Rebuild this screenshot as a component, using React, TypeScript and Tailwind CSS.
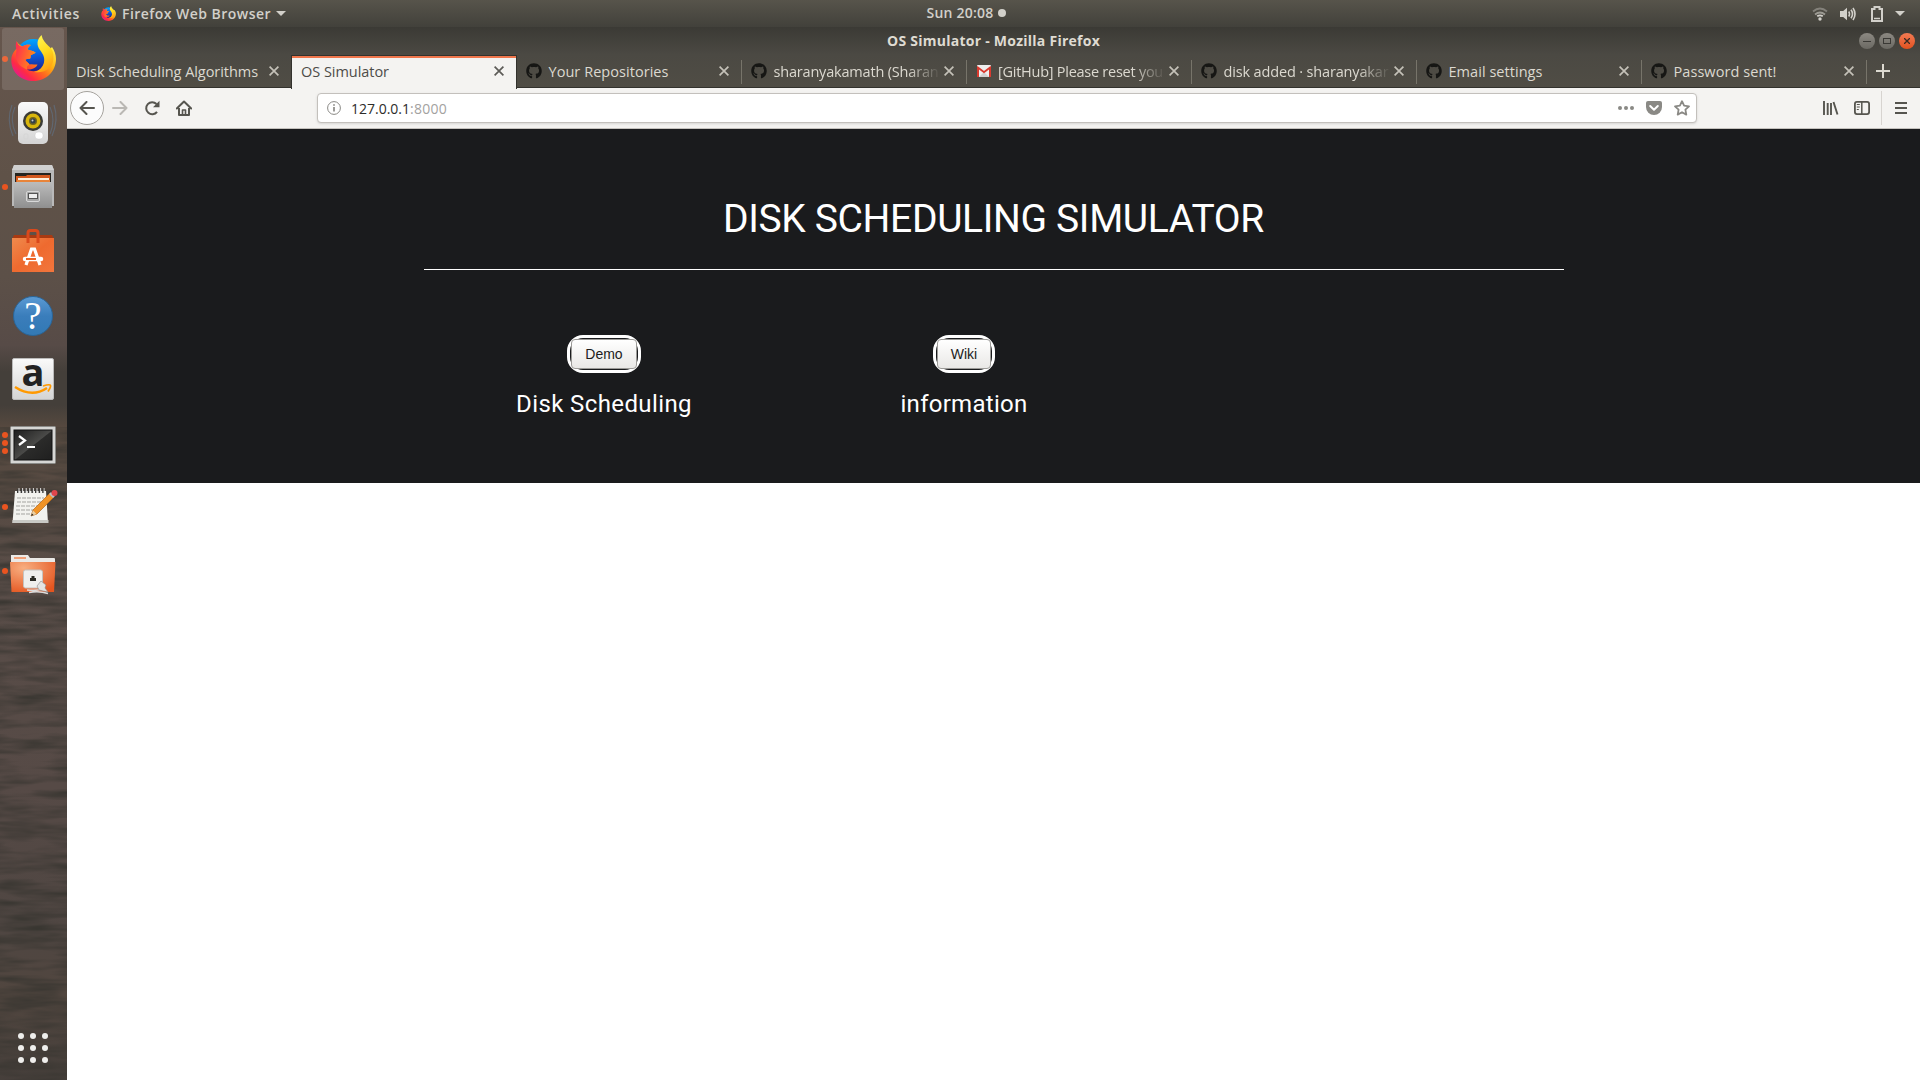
import { useLayoutEffect, useRef, useState, type ReactNode } from "react";
import { FaGithub } from "react-icons/fa";

/* Text tracked so that it fills a given width. */
function Fit({ children, w, className = "" }: { children: string; w: number; className?: string }) {
  const ref = useRef<HTMLSpanElement>(null);
  const [tracking, setTracking] = useState(0);
  useLayoutEffect(() => {
    const el = ref.current;
    if (!el) return;
    const natural = el.getBoundingClientRect().width - tracking * children.length;
    setTracking((w - natural) / children.length);
  }, [w, children]);
  return (
    <span ref={ref} className={`inline-block shrink-0 whitespace-pre ${className}`} style={{ letterSpacing: tracking }}>
      {children}
    </span>
  );
}

function FirefoxArt({ id }: { id: string }) {
  return (
    <>
      <defs>
        <linearGradient id={id + "a"} x1="0.9" y1="0.1" x2="0.15" y2="0.85">
          <stop offset="0" stopColor="#fff44f" />
          <stop offset="0.35" stopColor="#ffb310" />
          <stop offset="0.6" stopColor="#ff6a1f" />
          <stop offset="0.85" stopColor="#ff2a45" />
          <stop offset="1" stopColor="#e81e80" />
        </linearGradient>
        <linearGradient id={id + "b"} x1="0.4" y1="0" x2="0.5" y2="1">
          <stop offset="0" stopColor="#00a8ff" />
          <stop offset="0.45" stopColor="#0a5fe0" />
          <stop offset="1" stopColor="#25127a" />
        </linearGradient>
        <linearGradient id={id + "c"} x1="0.3" y1="0" x2="0.6" y2="1">
          <stop offset="0" stopColor="#fff650" />
          <stop offset="0.5" stopColor="#ffd91c" />
          <stop offset="1" stopColor="#ff9a12" />
        </linearGradient>
        <linearGradient id={id + "d"} x1="0" y1="0" x2="1" y2="0.4">
          <stop offset="0" stopColor="#ff2554" />
          <stop offset="1" stopColor="#ff8a1a" />
        </linearGradient>
      </defs>
      <circle cx="23" cy="22" r="18" fill={`url(#${id}b)`} />
      <path d="M6 6c.5 2.500 1.500 4 3 5C3 16 .8 20 .8 25.500 1 38 11 46 23 46c13 0 22.500-10 22.500-22 0-4.500-1.500-8.500-4-12l-8 8c2 5 .5 11-3.500 14-4.500 3-10 2.500-13.500.5 5 .3 9-1.500 10.500-5-3 .4-5-1-8 0-1-2-4-3-4-5 2-1 5-.5 5-1.500l.2-2.800 5-2.500c-2.500-2-5.500-2-8.200-3.200.5-2 1.800-3.500 3.500-4.500-4-.4-6.500 0-8.500 1.500C9 10 7 8 6 6Z" fill={`url(#${id}a)`} />
      <path d="M6 6c.5 2.500 1.500 4 3 5 1 .3 2 .2 3 .5 2-1.500 4.500-1.900 8.500-1.500-1.700 1-3 2.500-3.500 4.500 2.700 1.200 5.700 1.200 8.200 3.200l-5 2.500L20 23c0 1-3 .5-5 1.500 0 2 3 3 4 5-4 2-2 4-2.500 5C8 31 4 26 6 15c-1-3-1-6 0-9Z" fill={`url(#${id}d)`} />
      <path d="M31 0c-5 5-5 10-1.500 15C33 19.500 35 24 33 29c-1.500 4-5 7-9 8 9 1.500 17-3 18.500-10.500C44 19 42 14 38 11c-3-3-6-6-7-11Z" fill={`url(#${id}c)`} />
    </>
  );
}

function GmailMark() {
  return (
    <svg viewBox="0 0 14 12" className="h-[12px] w-[14px]">
      <rect width="14" height="12" rx="1" fill="#eee" />
      <path d="M2 12 7 7l5 5Z" fill="#d0d0d0" />
      <path d="M0 12V1.200h.8L7 6l6.200-4.800h.8V12h-2V4.500L7 8.200 2 4.500V12Z" fill="#d93a2f" />
    </svg>
  );
}

function Cross({ className }: { className: string }) {
  return (
    <svg viewBox="0 0 10 10" className={`size-[10px] shrink-0 ${className}`} fill="none" stroke="currentColor" strokeWidth="1.700">
      <path d="M.6.6 9.400 9.400M9.400.6.6 9.400" />
    </svg>
  );
}

type TabInfo = { title: string; w: number; icon?: "github" | "gmail"; active?: boolean; faded?: boolean; rule?: boolean };

const tabs: TabInfo[] = [
  { title: "Disk Scheduling Algorithms", w: 182 },
  { title: "OS Simulator", w: 88, active: true },
  { title: "Your Repositories", w: 120, icon: "github", rule: true },
  { title: "sharanyakamath (Sharan", w: 165, icon: "github", faded: true, rule: true },
  { title: "[GitHub] Please reset you", w: 165, icon: "gmail", faded: true, rule: true },
  { title: "disk added · sharanyakar", w: 165, icon: "github", faded: true, rule: true },
  { title: "Email settings", w: 94, icon: "github", rule: true },
  { title: "Password sent!", w: 103, icon: "github", rule: true },
];

function Tab({ title, w, icon, active, faded, rule }: TabInfo) {
  return (
    <div
      className={
        active
          ? "relative z-10 -ml-px flex h-[34px] w-[226px] shrink-0 items-center border-x border-t border-[#33322d] bg-[#f4f3f1] pr-[12px] pb-[3px] pl-[9px] text-[#4d4c48] shadow-[inset_0_2px_0_#f0764c]"
          : "relative flex h-[33px] w-[225px] shrink-0 items-center border-b border-[#33322d] pr-[13px] pl-[9px] text-[#dcd9d0]"
      }
    >
      {icon === "github" && <FaGithub className="mr-[6.500px] size-[16px] shrink-0 text-[#161614]" />}
      {icon === "gmail" && <span className="mr-[7px] ml-px flex w-[14px] shrink-0"><GmailMark /></span>}
      <span className={faded ? "mr-[3px] flex-1 mask-r-from-80% mask-r-to-100%" : "flex-1"}>
        <Fit w={w} className="text-[14.500px] leading-[22px]">{title}</Fit>
      </span>
      <Cross className={active ? "text-[#5c5b57]" : "text-[#c4c1b8]"} />
      {rule && <i className="absolute top-[5px] right-0 h-[24px] w-px bg-[#77746a]" />}
    </div>
  );
}

function TopBar() {
  return (
    <header className="grid h-[27px] shrink-0 grid-cols-3 items-center bg-linear-to-b from-[#57544b] to-[#42413b] text-[14px] leading-[26px] font-semibold text-[#d2d0ca]">
      <div className="flex items-center pl-[12px]">
        <Fit w={68}>Activities</Fit>
        <svg viewBox="0 0 46 46" className="mr-[6px] ml-[21px] size-[15px]"><FirefoxArt id="s" /></svg>
        <Fit w={149}>Firefox Web Browser</Fit>
        <svg viewBox="0 0 10 5" className="ml-[5px] h-[5px] w-[10px]" fill="currentColor"><path d="M0 0h10L5 5Z" /></svg>
      </div>
      <div className="flex items-center justify-center pb-px pl-[12px]">
        <Fit w={67}>Sun 20:08</Fit>
        <i className="ml-[4px] size-[8px] rounded-full bg-[#d2d0ca]" />
      </div>
      <div className="flex items-center justify-end pr-[15px]">
        <svg viewBox="0 0 16 14" className="h-[14px] w-[16px]" fill="none" stroke="#d2d0ca" strokeWidth="1.800">
          <path d="M1 4.500Q8-1.500 15 4.500" opacity=".4" />
          <path d="M3 7.500q5-4 10 0" opacity=".6" />
          <path d="M5.200 9.300q2.800-2 5.600 0" />
          <circle cx="8" cy="12" r="1.700" fill="#d2d0ca" stroke="none" />
        </svg>
        <svg viewBox="0 0 16 14" className="ml-[12px] h-[14px] w-[16px]" fill="none" stroke="#d2d0ca" strokeWidth="1.600">
          <path d="M0 4h3.200L7 .8v12.400L3.200 10H0Z" fill="#d2d0ca" stroke="none" />
          <path d="M8.700 4.500q1.600 2.500 0 5M11 2.800q3 4.200 0 8.400M13 1q4 6 0 12" />
        </svg>
        <svg viewBox="0 0 12 16" className="ml-[15px] h-[16px] w-[12px]" fill="none" stroke="#d2d0ca" strokeWidth="2">
          <path d="M1 3h2.500V1h5v2H11v12H1Z" />
          <path d="M3 12.500h6" strokeWidth="1.500" />
        </svg>
        <svg viewBox="0 0 10 5" className="ml-[12px] h-[5px] w-[10px]" fill="#d2d0ca"><path d="M0 0h10L5 5Z" /></svg>
      </div>
    </header>
  );
}

const dockItems: { name: string; dots: number[]; art: ReactNode }[] = [
  {
    name: "Firefox",
    dots: [59],
    art: (
      <>
        <rect x="2" y="28" width="62" height="62" rx="3" fill="#fff" opacity=".12" />
        <g transform="translate(10.500 35)"><FirefoxArt id="l" /></g>
      </>
    ),
  },
  {
    name: "Rhythmbox",
    dots: [],
    art: (
      <>
        <g fill="none" stroke="#5f7f9f" strokeWidth="1.200" opacity=".45">
          <path d="M15 107q-6 13 1 27M12 105q-6 15 1 31M50 107q6 13 0 27M54 105q5 15-2 31" />
        </g>
        <rect x="18" y="102" width="30" height="42" rx="5" fill="url(#silver)" />
        <circle cx="33" cy="121" r="10" fill="#3b3b35" />
        <circle cx="33" cy="121" r="7.500" fill="#d9b60c" />
        <circle cx="33" cy="121" r="4" fill="#6f6420" />
        <circle cx="33" cy="121" r="2.500" fill="#33404b" />
        <circle cx="32.500" cy="120.500" r="1" fill="#ccc" />
        <rect x="35" y="132" width="8" height="7" rx="3" fill="#fff" stroke="#ccc" strokeWidth=".5" />
        <rect x="24" y="134" width="4" height="5" rx="1" fill="none" stroke="#d5d5d5" />
      </>
    ),
  },
  {
    name: "Files",
    dots: [187],
    art: (
      <>
        <path d="M14 165h38l2 5v36H12v-36Z" fill="#b9b9b9" />
        <path d="M14 165h38l2 5H12Z" fill="#d0d0d0" />
        <rect x="15" y="173" width="36" height="10" fill="#26241f" />
        <path d="M16 176h10l1-1h23v8H16Z" fill="#d4581d" />
        <path d="M18 178h31v2H18Z" fill="#fff0dc" />
        <path d="M17 180h33v3H17Z" fill="#e8843a" />
        <path d="M14 182h38v26H14Z" fill="url(#steel)" />
        <rect x="26.500" y="191.500" width="13" height="10" rx="1.500" fill="#a6a6a6" stroke="#d8d8d8" />
        <rect x="28.500" y="193.500" width="9" height="5" fill="#eee" stroke="#555" />
      </>
    ),
  },
  {
    name: "Ubuntu Software",
    dots: [],
    art: (
      <>
        <path d="M14 235h38l2 4H12Z" fill="#a83a12" />
        <path d="M12 238h42v34H12Z" fill="url(#bag)" />
        <path d="M28 243v-10q0-2.500 2.500-2.500h5q2.500 0 2.500 2.500v10" fill="none" stroke="#d9491c" strokeWidth="3" />
        <path d="m26 265 5.500-16h3L40 265" fill="none" stroke="#fff" strokeWidth="3.200" />
        <path d="M25 259h16" stroke="#fff" strokeWidth="4.500" strokeLinecap="round" />
        <path d="M26 259h10" stroke="#ee6527" strokeWidth="2" />
      </>
    ),
  },
  {
    name: "Help",
    dots: [],
    art: (
      <>
        <circle cx="33" cy="316" r="19.500" fill="url(#help)" stroke="#2a6496" />
        <text x="33" y="329" textAnchor="middle" fontSize="39" fill="#fff" fontFamily="Liberation Serif, serif">?</text>
      </>
    ),
  },
  {
    name: "Amazon",
    dots: [],
    art: (
      <>
        <rect x="12.500" y="358.500" width="41" height="41" rx="1.500" fill="url(#silver)" stroke="#bbb" />
        <text x="33" y="386" textAnchor="middle" fontSize="38" fontWeight="bold" fill="#222" fontFamily="Open Sans, sans-serif">a</text>
        <path d="M15 387q17 11 32 1" fill="none" stroke="#f90" strokeWidth="2.500" />
        <path d="M43 386q7-2 7.500-.5t-2.500 6" fill="none" stroke="#f90" strokeWidth="1.700" />
      </>
    ),
  },
  {
    name: "Terminal",
    dots: [435, 443, 451],
    art: (
      <>
        <rect x="10.500" y="426.500" width="45" height="37" rx="1" fill="#d6d6d4" stroke="#8b8b88" />
        <rect x="14" y="430" width="38" height="30" fill="url(#screen)" stroke="#111" />
        <path d="m19 436 6 4.500-6 4.500" fill="none" stroke="#fff" strokeWidth="2.200" />
        <path d="M27 447h8" stroke="#fff" strokeWidth="2" />
      </>
    ),
  },
  {
    name: "Text Editor",
    dots: [507],
    art: (
      <>
        <path d="M15 491h31l2 32H12.500Z" fill="#f2f2ee" />
        <path d="M12.500 520h36v3h-36Z" fill="#c9c9c5" />
        <path d="M17 498h27M17 502h24M16 506h25M16 510h18M16 514h14" stroke="#a3a39f" strokeWidth="1" strokeDasharray="4 1" />
        <path d="M17 491h28" stroke="#3a3a38" strokeWidth="4" strokeDasharray="1.600 2" />
        <path d="M18.500 490.500h26" stroke="#ddd" strokeWidth="5" strokeDasharray="1 2.600" />
        <path d="m31 516 2-6 17-17 4 4-17 17Z" fill="#f09326" stroke="#b3661a" strokeWidth=".7" />
        <path d="m31 516 2-5.500 3.500 3.500Z" fill="#e9cfa3" />
        <path d="m31 516 1-2.500 1.500 1.500Z" fill="#222" />
        <path d="m49 494 2-2 4 4-2 2Z" fill="#b9bfc6" />
        <circle cx="54.500" cy="493" r="3" fill="#e0464c" />
      </>
    ),
  },
  {
    name: "Network Folder",
    dots: [571],
    art: (
      <>
        <path d="M11 555h17l2 3h24q1 0 1 1v10H11Z" fill="#ebe9e6" />
        <path d="M14 557h12v2H14Z" fill="#f0a078" />
        <path d="M10 562h45.500L54 592H11.500Z" fill="url(#folder)" />
        <rect x="23.500" y="570" width="19" height="18" rx="2" fill="#efefed" stroke="#c5c3c0" />
        <path d="M30 581v-3h1.500v-2h3v2H36v3Z" fill="#2b2b24" />
        <path d="M27 590q10 1 15-1M29 592.500q10-2 19 1" fill="none" stroke="#ddd" strokeWidth="1.600" />
        <path d="m37 586 4-5 5 4-1 3 3 4-5-1-4-1Z" fill="#e4e4e2" stroke="#888" strokeWidth=".6" />
      </>
    ),
  },
];

/* Wood grain of the wallpaper showing through the dock. */
function Grain() {
  return (
    <svg className="absolute inset-0 h-full w-full">
      <filter id="grain" x="0" y="0" width="100%" height="100%" colorInterpolationFilters="sRGB">
        <feTurbulence type="fractalNoise" baseFrequency="0.016 0.11" numOctaves="3" seed="4" />
        <feColorMatrix values="0 0 0 0 .22  0 0 0 0 .21  0 0 0 0 .19  2 0 0 0 -.7" />
      </filter>
      <rect y="400" width="67" height="653" filter="url(#grain)" />
    </svg>
  );
}

function Dock() {
  return (
    <nav className="relative flex w-[67px] shrink-0 flex-col bg-[linear-gradient(180deg,#66564d_0px,#5f5248_150px,#5c5048_250px,#574b47_318px,#443f3a_345px,#443f3a_378px,#56493f_400px,#594d48_560px,#564a46_760px,#4f4642_900px,#51463f_970px,#463f3b_1053px)]">
      <Grain />
      <svg className="absolute h-0 w-0">
        <defs>
          <linearGradient id="silver" x2="0" y2="1"><stop stopColor="#fafafa" /><stop offset="1" stopColor="#d4d4d4" /></linearGradient>
          <linearGradient id="steel" x2="0" y2="1"><stop stopColor="#bcbcbc" /><stop offset="1" stopColor="#8f8f8f" /></linearGradient>
          <linearGradient id="bag" x2="1" y2="1"><stop stopColor="#ef8a4d" /><stop offset=".5" stopColor="#ee6a2f" /><stop offset="1" stopColor="#f2763d" /></linearGradient>
          <linearGradient id="help" x2="0" y2="1"><stop stopColor="#5b9bd4" /><stop offset=".5" stopColor="#3a7dbb" /><stop offset="1" stopColor="#3279b4" /></linearGradient>
          <linearGradient id="screen" x2="1" y2="1"><stop stopColor="#1d1d1d" /><stop offset=".5" stopColor="#4a4a48" /><stop offset=".52" stopColor="#2b2b2a" /><stop offset="1" stopColor="#1f1f1f" /></linearGradient>
          <radialGradient id="folder" cx=".3" cy=".2" r=".9"><stop stopColor="#f8ae80" /><stop offset="1" stopColor="#e4551f" /></radialGradient>
        </defs>
      </svg>
      {dockItems.map((item, i) => (
        <svg key={item.name} viewBox={`0 ${27 + i * 64} 67 64`} className="relative h-[64px] w-[67px] shrink-0 overflow-visible">
          {item.dots.map((y) => <circle key={y} cx="5" cy={y} r="3" fill="#e95420" />)}
          {item.art}
        </svg>
      ))}
      <div className="relative mt-auto mb-[17px] ml-[18px] grid w-[30px] grid-cols-3 gap-[6px]">
        {Array.from({ length: 9 }, (_, i) => <i key={i} className="size-[6px] rounded-full bg-[#eeeeec]" />)}
      </div>
    </nav>
  );
}

function TitleBar() {
  return (
    <div className="grid h-[28px] shrink-0 grid-cols-[1fr_auto_1fr] items-center text-[14px] leading-[28px] font-bold text-[#dfdbd2]">
      <span />
      <Fit w={213}>OS Simulator - Mozilla Firefox</Fit>
      <div className="flex justify-end gap-[4px] pr-[5px]">
        <i className="flex size-[16px] items-center justify-center rounded-full bg-linear-to-b from-[#8c8982] to-[#6b6963]"><b className="h-px w-[8px] bg-[#3a3935]" /></i>
        <i className="flex size-[16px] items-center justify-center rounded-full bg-linear-to-b from-[#8c8982] to-[#6b6963]"><b className="h-[6px] w-[8px] border border-[#3a3935]" /></i>
        <i className="flex size-[16px] items-center justify-center rounded-full bg-linear-to-b from-[#f37a52] to-[#e2511c]">
          <svg viewBox="0 0 6 6" className="size-[6px]" stroke="#3a2a22" strokeWidth="1.300"><path d="m0 0 6 6M6 0 0 6" /></svg>
        </i>
      </div>
    </div>
  );
}

function NavBar() {
  return (
    <div className="flex h-[41px] shrink-0 items-center border-b border-[#c4c1bd] bg-[#f4f3f1] text-[#56554f]">
      <span className="ml-[3px] flex size-[34px] items-center justify-center rounded-full border border-[#a5a29d] bg-[#fcfcfc]">
        <svg viewBox="0 0 16 14" className="h-[14px] w-[16px]" fill="none" stroke="currentColor" strokeWidth="2" strokeLinecap="round" strokeLinejoin="round"><path d="M15 7H1.500M7.500 1l-6 6 6 6" /></svg>
      </span>
      <svg viewBox="0 0 16 14" className="ml-[8px] h-[14px] w-[16px] text-[#bab8b4]" fill="none" stroke="currentColor" strokeWidth="2" strokeLinecap="round" strokeLinejoin="round"><path d="M1 7h13.500M8.500 1l6 6-6 6" /></svg>
      <svg viewBox="0 0 16 16" className="ml-[16px] size-[16px]" fill="none" stroke="currentColor" strokeWidth="2"><path d="M13 11.800A6 6 0 1 1 12.500 4" /><path d="M15.500.8v6.400H9Z" fill="currentColor" stroke="none" /></svg>
      <svg viewBox="0 0 16 16" className="ml-[16px] size-[16px]" fill="none" stroke="currentColor" strokeWidth="2" strokeLinejoin="round"><path d="M.8 8.500 8 1.500l7.200 7" strokeLinecap="round" /><path d="M3 8v7h10V8" /><path d="M6.500 15v-5h3v5" strokeWidth="1.600" /></svg>
      <div className="ml-[125px] flex h-[30px] w-[1380px] items-center rounded-[4px] border border-[#c3c0bc] bg-white pl-[9px] text-[#8a8985] shadow-sm">
        <svg viewBox="0 0 14 14" className="size-[14px]" fill="none" stroke="currentColor"><circle cx="7" cy="7" r="6.400" /><path d="M7 6v4.500M7 3.300v1.500" strokeWidth="1.700" /></svg>
        <span className="ml-[10px] flex pt-px text-[14px] leading-[27px]">
          <Fit w={59} className="text-[#2d2c2a]">127.0.0.1</Fit>
          <Fit w={37} className="text-[#a3a29f]">:8000</Fit>
        </span>
        <svg viewBox="0 0 16 4" className="ml-auto h-[4px] w-[16px]" fill="currentColor"><circle cx="2" cy="2" r="2" /><circle cx="8" cy="2" r="2" /><circle cx="14" cy="2" r="2" /></svg>
        <svg viewBox="0 0 16 14" className="ml-[12px] h-[14px] w-[16px]"><path d="M2 0h12q2 0 2 2v4a8 8 0 0 1-16 0V2q0-2 2-2Z" fill="currentColor" /><path d="m4.200 5 3.800 3.700L11.800 5" fill="none" stroke="#fff" strokeWidth="2" strokeLinecap="round" strokeLinejoin="round" /></svg>
        <svg viewBox="0 0 16 16" className="mr-[6px] ml-[12px] size-[16px]" fill="none" stroke="currentColor" strokeWidth="1.800" strokeLinejoin="round"><path d="m8 1.200 2.100 4.500 4.900.6-3.600 3.400.9 4.900L8 12.200l-4.300 2.400.9-4.900L1 6.300l4.900-.6Z" /></svg>
      </div>
      <svg viewBox="0 0 16 14" className="ml-auto h-[14px] w-[16px]" fill="none" stroke="currentColor" strokeWidth="2"><path d="M1 0v14M4.700 2v12M8 2v12M10.500 1l4 12.500" strokeWidth="1.900" /></svg>
      <svg viewBox="0 0 16 14" className="ml-[15px] h-[14px] w-[16px]" fill="none" stroke="currentColor" strokeWidth="1.800"><rect x=".9" y=".9" width="14.200" height="12.200" rx="2" /><path d="M7.800 1v12" strokeWidth="1.500" /><path d="M2.800 3.500h3M2.800 6h3M2.800 8.500h2" strokeWidth="1" /></svg>
      <i className="ml-[11px] h-[34px] w-px bg-[#d7d4d0]" />
      <svg viewBox="0 0 12 12" className="mr-[13px] ml-[13px] size-[12px]" stroke="currentColor" strokeWidth="2"><path d="M0 1h12M0 6h12M0 11h12" /></svg>
    </div>
  );
}

function Choice({ label, caption, w }: { label: string; caption: string; w: number }) {
  return (
    <div className="flex w-[360px] flex-col items-center">
      <span className="rounded-[16px] border-[3px] border-white p-px">
        <button className="block h-[30px] rounded-[4px] border border-[#9b9a97] bg-linear-to-b from-white to-[#e9e8e6] px-[13px] font-['Liberation_Sans',sans-serif] text-[14px] leading-[28px] text-[#1c1c1c]">
          {label}
        </button>
      </span>
      <p className="mt-[14px] text-[24px] leading-[34px]"><Fit w={w}>{caption}</Fit></p>
    </div>
  );
}

export default function App() {
  return (
    <div className="flex h-[1080px] w-[1920px] flex-col overflow-hidden bg-white font-['Open_Sans','Noto_Sans',sans-serif]">
      <TopBar />
      <div className="flex min-h-0 flex-1">
        <Dock />
        <main className="flex min-w-0 flex-1 flex-col">
          <div className="h-[61px] shrink-0 bg-linear-to-b from-[#3b3a35] via-[#4b4943] via-45% to-[#504d45]">
            <TitleBar />
            <div className="flex h-[33px]">
              {tabs.map((t) => <Tab key={t.title} {...t} />)}
              <div className="flex flex-1 items-center border-b border-[#33322d] pl-[9px]">
                <svg viewBox="0 0 14 14" className="size-[14px]" stroke="#dcd9d0" strokeWidth="2"><path d="M7 0v14M0 7h14" /></svg>
              </div>
            </div>
          </div>
          <NavBar />
          <section className="flex h-[354px] shrink-0 flex-col items-center bg-[#1a1b1d] font-[Roboto,sans-serif] text-white">
            <h1 className="mt-[66px] text-[39px] leading-[48px]"><Fit w={541}>DISK SCHEDULING SIMULATOR</Fit></h1>
            <hr className="mt-[26px] w-[1140px] border-white" />
            <div className="mt-[65px] flex w-[1140px] pl-[0.5px]">
              <Choice label="Demo" caption="Disk Scheduling" w={176} />
              <Choice label="Wiki" caption="information" w={127} />
            </div>
          </section>
        </main>
      </div>
    </div>
  );
}
